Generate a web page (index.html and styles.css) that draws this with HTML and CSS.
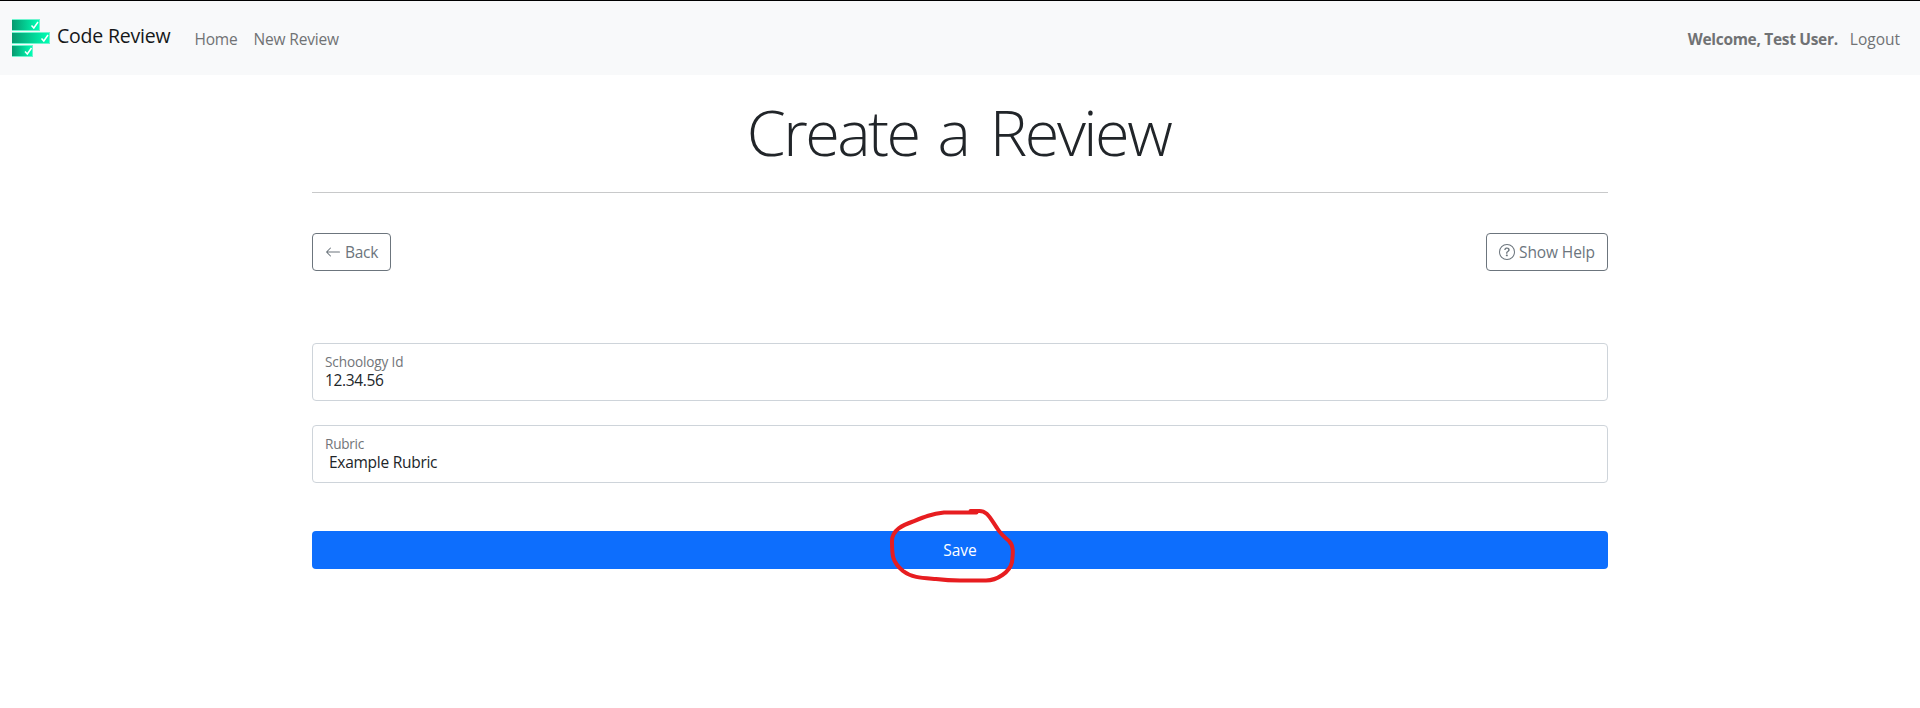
FILE: index.html
```html
<!DOCTYPE html>
<html lang="en">
<head>
<meta charset="utf-8">
<title>Create a Review</title>
<link rel="stylesheet" href="styles.css">
</head>
<body>
<nav class="navbar">
  <a class="brand">
    <svg class="logo" width="38" height="38" viewBox="0 0 38 38">
      <defs>
        <linearGradient id="bar" x1="0" x2="1" y1="0" y2="0"><stop offset="0" stop-color="#07996f"/><stop offset="1" stop-color="#00ffb4"/></linearGradient>
      </defs>
      <g fill="#6ff5cf"><rect width="28" height="12"/><rect y="13" width="38" height="12"/><rect y="26" width="21" height="12"/></g>
      <g fill="url(#bar)"><rect y="1" width="27" height="10"/><rect y="14" width="37" height="10"/><rect y="27" width="20" height="10"/></g>
      <g fill="none" stroke="#fff" stroke-width="1.5"><path d="M19.500 6.500l2.300 2.500 4.200-6"/><path d="M29.500 19.500l2.300 2.500 4.200-6"/><path d="M13 32.500l2.300 2.500 4.200-6"/></g>
    </svg>
    <span class="brand-name">Code Review</span>
  </a>
  <a class="nav-link home">Home</a>
  <a class="nav-link new-review">New Review</a>
  <span class="nav-link welcome">Welcome, Test User.</span>
  <a class="nav-link logout">Logout</a>
</nav>
<main class="container">
  <h1 class="title"><span class="title-create">Create</span> <span class="title-a">a</span> <span class="title-review">Review</span></h1>
  <hr class="rule">
  <div class="toolbar">
    <a class="btn"><svg width="16" height="16" viewBox="0 0 16 16" fill="currentColor"><path fill-rule="evenodd" d="M15 8a.5.5 0 0 0-.5-.5H2.707l3.147-3.146a.5.5 0 1 0-.708-.708l-4 4a.5.5 0 0 0 0 .708l4 4a.5.5 0 0 0 .708-.708L2.707 8.500H14.500A.5.5 0 0 0 15 8z"/></svg><span class="back">Back</span></a>
    <a class="btn"><svg width="16" height="16" viewBox="0 0 16 16" fill="currentColor"><path d="M8 15A7 7 0 1 1 8 1a7 7 0 0 1 0 14zm0 1A8 8 0 1 0 8 0a8 8 0 0 0 0 16z"/><path d="M5.255 5.786a.237.237 0 0 0 .241.247h.825c.138 0 .248-.113.266-.25.090-.656.540-1.134 1.342-1.134.686 0 1.314.343 1.314 1.168 0 .635-.374.927-.965 1.371-.673.489-1.206 1.060-1.168 1.987l.003.217a.25.25 0 0 0 .25.246h.811a.25.25 0 0 0 .25-.25v-.105c0-.718.273-.927 1.010-1.486.609-.463 1.244-.977 1.244-2.056 0-1.511-1.276-2.241-2.673-2.241-1.267 0-2.655.590-2.750 2.286zm1.557 5.763c0 .533.425.927 1.010.927.609 0 1.028-.394 1.028-.927 0-.552-.420-.940-1.029-.940-.584 0-1.009.388-1.009.940z"/></svg><span class="help">Show Help</span></a>
  </div>
  <div class="field"><span class="label schoology">Schoology Id</span><span class="value number">12.34.56</span></div>
  <div class="field"><span class="label rubric">Rubric</span><span class="value example">Example Rubric</span></div>
  <div class="save"><span class="save-text">Save</span>
    <svg class="mark" width="130" height="80" viewBox="885 505 130 80"><path d="M976.500 512.600H944C931 514 924 517 913 521.500C903 525 892 530 892 541C892 555 892 562 903 571C912 578 923 578 936 579C948 580.500 953 580.500 960 580.500H986C997 580.500 1010 572 1012 562C1013 553 1014 546 1009 541C1003 536 1000 533 997 528C990 518 987 510 978 511H970.500"/></svg>
  </div>
</main>
</body>
</html>
```
FILE: styles.css
```css
* { box-sizing: border-box; }
body { min-height: 100vh; margin: 0; background: #fff; color: #212529; font: 16px/24px "Open Sans", "Noto Sans", sans-serif; }
.navbar { display: flex; align-items: center; height: 75px; padding: 0 20px 0 12px; border-top: 1px solid #000; background: #f8f9fa; color: #707274; }
.brand { display: flex; align-items: center; color: #151719; }
.brand-name { margin: -4px 0 0 7px; font-size: 19.500px; line-height: 30px; letter-spacing: -0.2px; white-space: nowrap; }
.nav-link { padding-top: 2px; font-size: 15.500px; letter-spacing: -0.18px; white-space: nowrap; }
.home { margin-left: 24px; }
.new-review { margin-left: 16px; }
.welcome { margin-left: auto; font-weight: 700; letter-spacing: -0.31px; }
.logout { margin-left: 12px; letter-spacing: 0; }
.container { width: 1296px; margin: 0 auto; }
.title { display: flex; justify-content: center; gap: 19px; margin: 18px 0 0; padding-right: 3px; font-size: 63px; line-height: 77px; font-weight: 300; }
.title-create { letter-spacing: -2.6px; }
.title-review { letter-spacing: -2.5px; }
.rule { height: 1px; margin: 22px 0 40px; border: 0; background: #c8c9ca; }
.toolbar { display: flex; justify-content: space-between; margin-bottom: 72px; }
.btn { display: flex; align-items: center; gap: 4px; height: 38px; padding: 0 12px; border: 1px solid #6c757d; border-radius: 4px; color: #6c757d; font-size: 15.500px; white-space: nowrap; }
.back { letter-spacing: -0.3px; }
.help { letter-spacing: -0.1px; }
.field { display: flex; flex-direction: column; height: 58px; margin-bottom: 24px; padding: 8px 12px; border: 1px solid #ced4da; border-radius: 4px; }
.label { margin-bottom: -1px; color: #727579; font-size: 13.600px; line-height: 20px; letter-spacing: -0.14px; }
.value { font-size: 15.500px; line-height: 18px; }
.rubric { letter-spacing: -0.25px; }
.number { letter-spacing: -0.35px; }
.example { padding-left: 4px; letter-spacing: -0.27px; }
.save { position: relative; display: flex; align-items: center; justify-content: center; height: 38px; margin-top: 48px; border-radius: 4px; background: #0d6efd; color: #fff; font-size: 15.500px; }
.mark { position: absolute; left: 573px; top: -26px; overflow: visible; fill: none; stroke: #e71d20; stroke-width: 4; stroke-linecap: round; stroke-linejoin: round; }
```
